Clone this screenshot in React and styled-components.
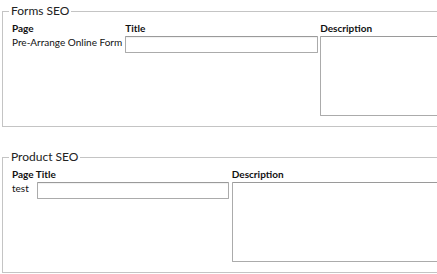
import React from "react";
import styled, { createGlobalStyle } from "styled-components";

const GlobalStyle = createGlobalStyle`
  html, body {
    margin: 0;
    padding: 0;
    background: #fff;
    overflow: hidden;
  }
  body {
    font-family: Lato, "Liberation Sans", sans-serif;
    font-size: 10px;
    line-height: 12px;
    color: #111;
  }
`;

const Page = styled.div`
  width: 560px;
  padding: 4px 0 0 2px;
`;

const Fieldset = styled.fieldset`
  margin: 0 0 ${(p) => p.$gap || 0}px 0;
  padding: 4px 8px 10px 9px;
  border: 1px solid #c4c4c4;
  border-right: none;
`;

const Legend = styled.legend`
  padding: 0 2px;
  margin-left: -3px;
  color: #222;
  font-size: 12px;
  line-height: 14px;
`;

const Table = styled.table`
  border-collapse: collapse;
  border-spacing: 0;
`;

const Head = styled.th`
  text-align: left;
  font-weight: 700;
  padding: 0 3px 2px 0;
  vertical-align: bottom;
  white-space: nowrap;
`;

const Cell = styled.td`
  padding: 0 ${(p) => p.$gap || 3}px 0 0;
  vertical-align: top;
  white-space: nowrap;
`;

const TextInput = styled.input`
  box-sizing: border-box;
  display: block;
  width: ${(p) => p.$w}px;
  height: 17px;
  margin: 0;
  border: 1px solid #ababab;
  border-top-color: #9a9a9a;
  border-radius: 1px;
  box-shadow: inset 0 1px 1px rgba(0, 0, 0, 0.06);
  font: inherit;
  padding: 0 3px;
`;

const TextArea = styled.textarea`
  box-sizing: border-box;
  display: block;
  width: 240px;
  height: 80px;
  margin: 0;
  border: 1px solid #ababab;
  border-top-color: #9a9a9a;
  border-radius: 1px;
  font: inherit;
  resize: none;
`;

const App = () => (
  <Page>
    <GlobalStyle />
    <Fieldset $gap={23}>
      <Legend>Forms SEO</Legend>
      <Table>
        <thead>
          <tr>
            <Head>Page</Head>
            <Head>Title</Head>
            <Head>Description</Head>
          </tr>
        </thead>
        <tbody>
          <tr>
            <Cell>Pre-Arrange Online Form</Cell>
            <Cell $gap={2}>
              <TextInput type="text" $w={193} />
            </Cell>
            <Cell>
              <TextArea />
            </Cell>
          </tr>
        </tbody>
      </Table>
    </Fieldset>
    <Fieldset>
      <Legend>Product SEO</Legend>
      <Table>
        <thead>
          <tr>
            <Head colSpan={2}>Page Title</Head>
            <Head>Description</Head>
          </tr>
        </thead>
        <tbody>
          <tr>
            <Cell $gap={8}>test</Cell>
            <Cell $gap={3}>
              <TextInput type="text" $w={192} />
            </Cell>
            <Cell>
              <TextArea />
            </Cell>
          </tr>
        </tbody>
      </Table>
    </Fieldset>
  </Page>
);

export default App;
